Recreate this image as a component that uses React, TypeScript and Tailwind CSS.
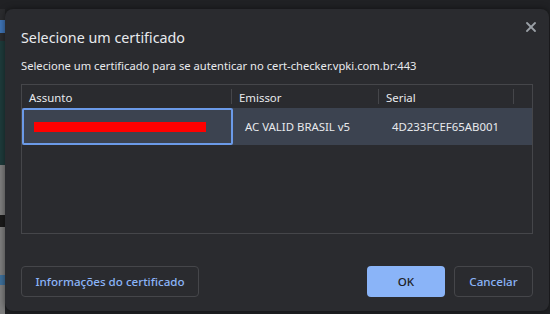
import { X } from "lucide-react";

const FONT = { fontFamily: '"Segoe UI", "Noto Sans", "Liberation Sans", sans-serif' };

function LeftStrip() {
    // Sliver of the page behind the dialog.
    return (
        <div className="flex w-[5px] flex-col">
            <div className="h-[11px] bg-[#2b2c2f]" />
            <div className="h-[13px] bg-[#3f74b5]" />
            <div className="h-[8px] bg-[#2b2c2f]" />
            <div className="h-[124px] bg-[#1e3b3b]" />
            <div className="flex flex-1 flex-col bg-[#7e7e7e]">
                <div className="mt-[50px] h-[12px] bg-[#1a1a1a]" />
                <div className="mt-[48px] h-[10px] bg-[#3d6f9a]" />
            </div>
        </div>
    );
}

export default function App() {
    return (
        <div className="flex h-[314px] w-[550px] flex-col overflow-hidden bg-[#202124]" style={FONT}>
            <div className="h-[9px] shrink-0" />

            <div className="flex flex-1">
                <LeftStrip />

                <div className="mb-[3px] flex w-[544px] flex-col rounded-lg bg-[#2a2b2f] pl-4 pr-4 shadow-[0_0_6px_rgba(0,0,0,0.5)]">
                    <div className="flex items-start justify-between">
                        <h1 className="pt-[19px] text-[14.3px] leading-5 text-[#e8eaed]">
                            Selecione um certificado
                        </h1>
                        <button className="mr-[-6px] mt-[10px] text-[#9aa0a6]">
                            <X size={16} strokeWidth={2.75} />
                        </button>
                    </div>

                    <p className="mt-[10px] text-[11.2px] leading-4 text-[#e8eaed]">
                        Selecione um certificado para se autenticar no cert-checker.vpki.com.br:443
                    </p>

                    <div className="mt-[10px] h-[150px] w-[512px] border border-[#45464a]">
                        <div className="flex h-[23px] text-[11.4px] text-[#e8eaed]">
                            <div className="my-[4px] flex w-[210px] items-center border-r border-[#45464a] pl-[7px] pt-[2px] leading-4">Assunto</div>
                            <div className="my-[4px] flex w-[147px] items-center border-r border-[#45464a] pl-[7px] pt-[2px] leading-4">Emissor</div>
                            <div className="my-[4px] flex w-[135px] items-center border-r border-[#45464a] pl-[7px] pt-[2px] leading-4">Serial</div>
                        </div>

                        <div className="flex h-[37px] bg-[#3c4350] text-[11.4px] text-[#e8eaed]">
                            <div className="flex w-[211px] items-center rounded-[2px] border-2 border-[#6b9ae8] pl-[10px]">
                                <div className="h-[10px] w-[172px] bg-[#ff0000]" />
                            </div>
                            <div className="flex w-[146px] items-center pl-[12px]">AC VALID BRASIL v5</div>
                            <div className="flex items-center pl-[13px]">4D233FCEF65AB001</div>
                        </div>
                    </div>

                    <div className="mt-[32px] flex items-center">
                        <button className="h-[31px] w-[178px] rounded-[4px] border border-[#45464a] text-[11.6px] font-medium text-[#8ab4f8]">
                            Informações do certificado
                        </button>
                        <div className="flex-1" />
                        <button className="h-[31px] w-[78px] rounded-[4px] bg-[#8ab4f8] text-[11.6px] font-medium text-[#202124]">
                            OK
                        </button>
                        <button className="ml-[9px] h-[31px] w-[79px] rounded-[4px] border border-[#45464a] text-[11.6px] font-medium text-[#8ab4f8]">
                            Cancelar
                        </button>
                    </div>
                </div>

                <div className="w-[1px]" />
            </div>
        </div>
    );
}
